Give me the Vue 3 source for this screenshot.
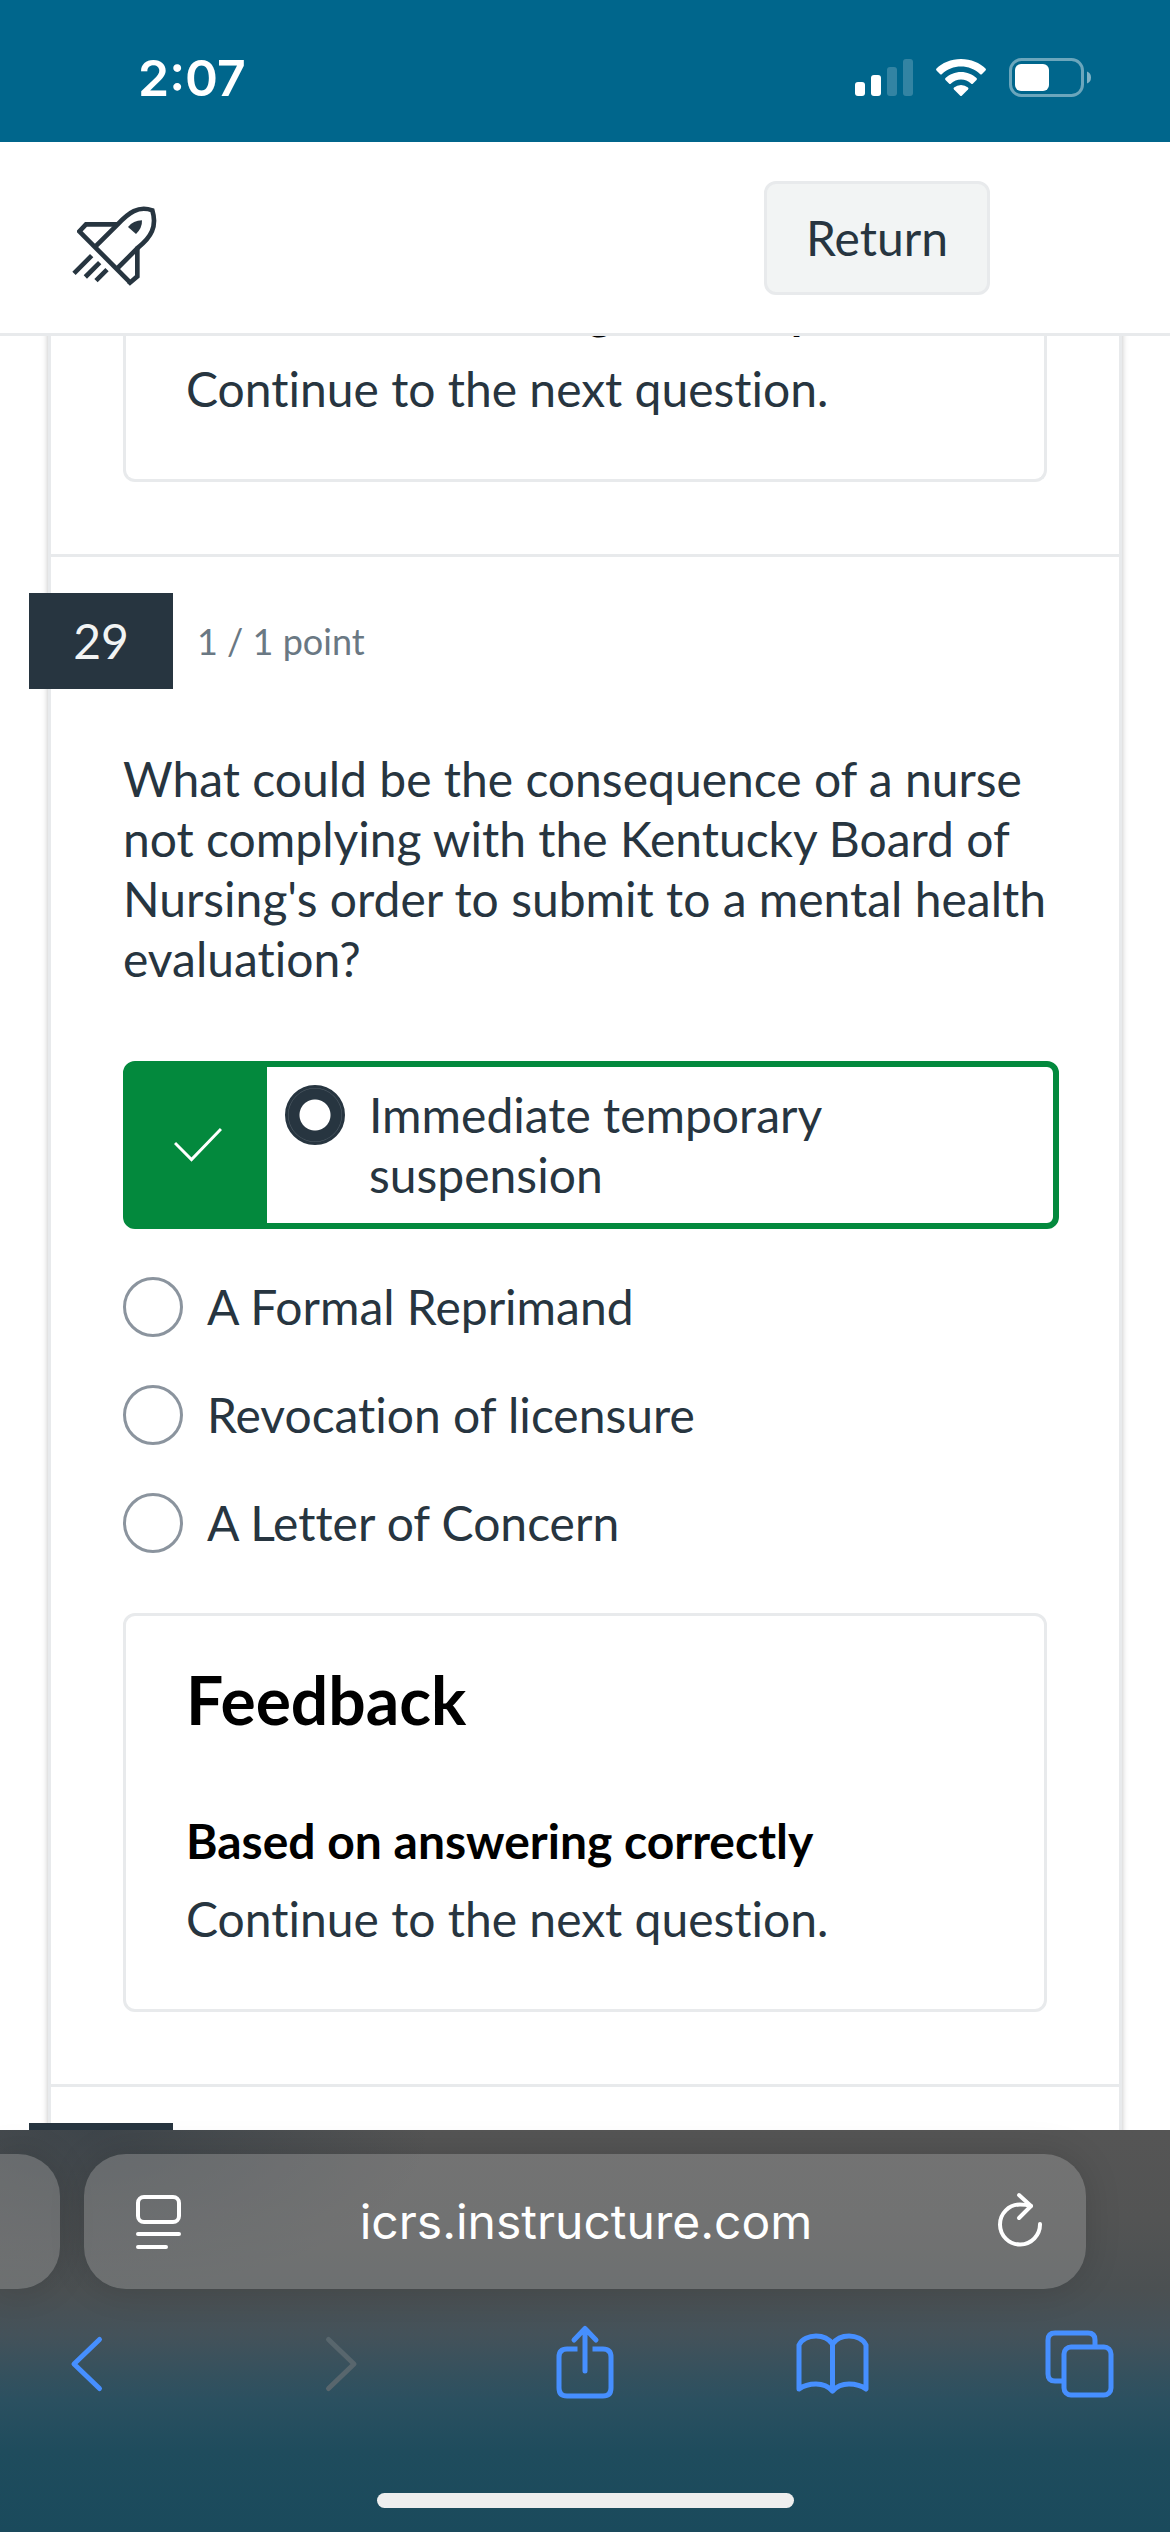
<script setup>
import { ref } from 'vue'

const answers = [
  { id: 'suspension', text: 'Immediate temporary suspension', correct: true },
  { id: 'reprimand', text: 'A Formal Reprimand' },
  { id: 'revocation', text: 'Revocation of licensure' },
  { id: 'letter', text: 'A Letter of Concern' },
]
const selected = ref('suspension')
const address = ref('icrs.instructure.com')
</script>

<template>
  <div class="screen">
    <div class="status">
      <span class="clock">2:07</span>
      <div class="indicators">
        <svg width="58" height="40" viewBox="0 0 58 40" fill="#fff">
          <rect x="0" y="24" width="10" height="14" rx="3" />
          <rect x="16" y="17" width="10" height="21" rx="3" />
          <rect x="32" y="9" width="10" height="29" rx="3" opacity=".2" />
          <rect x="48" y="1" width="10" height="37" rx="3" opacity=".2" />
        </svg>
        <svg width="52" height="40" viewBox="0 0 52 40" fill="#fff">
          <path d="M26 1C36 1 45 5 50.500 10.500Q51.500 11.500 50.500 12.500L47 16Q46 17 45 16C40 11 33 8.500 26 8.500S12 11 7 16Q6 17 5 16L1.500 12.500Q.5 11.500 1.500 10.500C7 5 16 1 26 1Z" />
          <path d="M26 14C32 14 37.500 16.500 41.500 20Q42.500 21 41.500 22L38 25.500Q37 26.500 36 25.500C33 23 30 21.500 26 21.500S19 23 16 25.500Q15 26.500 14 25.500L10.500 22Q9.500 21 10.500 20C14.500 16.500 20 14 26 14Z" />
          <path d="M26 27Q30 27 33 29.500Q34 30.500 33 31.500L27 37.500Q26 38.500 25 37.500L19 31.500Q18 30.500 19 29.500Q22 27 26 27Z" />
        </svg>
        <svg width="84" height="40" viewBox="0 0 84 40">
          <rect x="1.500" y="1.500" width="72" height="36" rx="11" fill="none" stroke="#fff" stroke-opacity=".42" stroke-width="3" />
          <rect x="6" y="6" width="34" height="27" rx="6" fill="#fff" />
          <path d="M78 13.500Q82 15 82 19.500T78 25.500Z" fill="#fff" opacity=".5" />
        </svg>
      </div>
    </div>

    <header class="header">
      <a class="logo" href="#" aria-label="Home">
        <svg width="88" height="84" viewBox="60 72 264 252" fill="none" stroke="#273540" stroke-width="14">
          <path d="M88 154L240 307" />
          <path d="M88 158V154L108 133H203" />
          <path d="M136 200L203 133C236 98 265 76 307 91C322 140 303 172 265 202L200 267" />
          <path d="M262 200V289L240 308L236 304" />
          <path d="M72 280L125 227M106 291L149 248M138 302L171 269" />
          <path d="M234 141Q250 121 276 121Q277 144 258 162Z" fill="#273540" stroke="none" />
        </svg>
      </a>
      <button class="return" type="button">Return</button>
    </header>

    <main class="viewport">
      <div class="sheet">
        <section class="question previous">
          <div class="feedback continued">
            <h3>Based on answering correctly</h3>
            <p>Continue to the next question.</p>
          </div>
        </section>

        <section class="question">
          <div class="meta">
            <span class="number">29</span>
            <span class="points">1 / 1 point</span>
          </div>
          <p id="prompt" class="prompt">
            What could be the consequence of a nurse not complying with the Kentucky Board of Nursing's order to submit to a mental health evaluation?
          </p>
          <div class="answers" role="radiogroup" aria-labelledby="prompt">
            <div v-for="a in answers" :key="a.id" class="answer" :class="{ correct: a.correct }">
              <span v-if="a.correct" class="mark">
                <svg width="48" height="36" viewBox="0 0 48 36" fill="none" stroke="#fff" stroke-width="3">
                  <path d="M1 16L17.500 32.500L47 2" />
                </svg>
              </span>
              <label :for="a.id">
                <input :id="a.id" v-model="selected" type="radio" name="answer" :value="a.id" />
                <span>{{ a.text }}</span>
              </label>
            </div>
          </div>
          <div class="feedback">
            <h2>Feedback</h2>
            <h3>Based on answering correctly</h3>
            <p>Continue to the next question.</p>
          </div>
        </section>

        <section class="question">
          <div class="meta">
            <span class="number"></span>
          </div>
        </section>
      </div>
    </main>

    <footer class="browser">
      <div class="tabs">
        <div class="neighbour"></div>
        <div class="address">
          <button type="button" aria-label="Page menu">
            <svg width="48" height="60" viewBox="0 0 48 60" fill="none" stroke="#fff" stroke-width="4" stroke-linecap="round">
              <rect x="4" y="5" width="41" height="25" rx="6" />
              <path d="M4 42H45M4 55H32" />
            </svg>
          </button>
          <input v-model="address" type="text" aria-label="Address" />
          <button type="button" aria-label="Reload">
            <svg width="48" height="60" viewBox="0 0 48 60" fill="none" stroke="#fff" stroke-width="4" stroke-linecap="round" stroke-linejoin="round">
              <path d="M44 32A20 20 0 1 1 24 12.500Q30 12.500 35 14" />
              <path d="M23 3L35 14L23 26" />
            </svg>
          </button>
        </div>
      </div>
      <nav class="toolbar">
        <button type="button" aria-label="Back">
          <svg width="84" height="84" viewBox="0 0 84 84"><path d="M55.500 19.500L30 44L55.500 68.500" /></svg>
        </button>
        <button type="button" class="off" aria-label="Forward">
          <svg width="84" height="84" viewBox="0 0 84 84"><path d="M35.500 19.500L61 44L35.500 68.500" /></svg>
        </button>
        <button type="button" aria-label="Share">
          <svg width="84" height="84" viewBox="0 0 84 84">
            <path stroke-linecap="butt" d="M35.500 29H25Q17 29 17 37V68Q17 76 25 76H61Q69 76 69 68V37Q69 29 61 29H50.500" />
            <path d="M43 9V51M32 20L43 8.500L54 20" />
          </svg>
        </button>
        <button type="button" aria-label="Bookmarks">
          <svg width="84" height="84" viewBox="0 0 84 84">
            <path d="M41.500 24C38 19 32 16 25 16S11 19 8 25V69C12 66 18 64 25 64S38 67 41.500 71C45 67 51 64 58 64S71 66 75 69V25C72 19 65 16 58 16S45 19 41.500 24V71" />
          </svg>
        </button>
        <button type="button" aria-label="Tabs">
          <svg width="84" height="84" viewBox="0 0 84 84">
            <rect x="24" y="27" width="47" height="48" rx="7" />
            <path stroke-linecap="butt" d="M24 61H15Q8 61 8 54V20Q8 13 15 13H48Q55 13 55 20V27" />
          </svg>
        </button>
      </nav>
      <div class="home"></div>
    </footer>
  </div>
</template>

<style>
body {
  margin: 0;
  background: #fff;
}
</style>

<style scoped>
.screen {
  display: flex;
  flex-direction: column;
  height: 100vh;
  overflow: hidden;
  background: #fff;
  color: #273540;
  font-family: Lato, sans-serif;
  font-size: 48px;
  line-height: 60px;
  font-variant-ligatures: none;
}
.screen * {
  box-sizing: border-box;
}
h2,
h3,
p {
  margin: 0;
}
button {
  padding: 0;
  border: 0;
  background: none;
  color: inherit;
  font: inherit;
  font-variant-ligatures: none;
}
svg {
  display: block;
}

/* device status bar */
.status {
  flex: none;
  display: flex;
  align-items: center;
  justify-content: space-between;
  height: 142px;
  padding: 14px 77px 0 138px;
  background: #00668c;
}
.clock {
  color: #fff;
  font: 600 50px/60px Inter, sans-serif;
}
.indicators {
  display: flex;
  gap: 22px;
}

/* page header */
.header {
  flex: none;
  display: flex;
  align-items: center;
  justify-content: space-between;
  height: 194px;
  padding: 0 180px 0 70px;
  border-bottom: 3px solid #e8eaec;
}
.logo {
  padding-top: 16px;
}
.return {
  height: 114px;
  padding: 0 39px;
  border: 3px solid #e8eaec;
  border-radius: 12px;
  background: #f2f4f4;
}

/* quiz sheet */
.viewport {
  flex: 1;
  min-height: 0;
  overflow: hidden;
}
.sheet {
  margin: -55px 48px 0;
  border: solid #e8eaec;
  border-width: 0 3px;
  box-shadow: 0 0 6px rgba(0, 0, 0, 0.25);
}
.question {
  padding: 36px 72px 72px;
}
.question + .question {
  border-top: 3px solid #e8eaec;
}
.previous {
  padding-top: 0;
}
.meta {
  display: flex;
  align-items: center;
  gap: 24px;
  margin-left: -94px;
}
.number {
  width: 144px;
  height: 96px;
  background: #273540;
  color: #f2f4f4;
  line-height: 96px;
  text-align: center;
}
.points {
  color: #6a7883;
  font-size: 36px;
}
.prompt {
  margin: 60px 0 72px;
}
.answers {
  display: flex;
  flex-direction: column;
  gap: 48px;
  margin-bottom: 60px;
}
.answer label {
  display: flex;
  gap: 24px;
}
.answer input {
  flex: none;
  width: 60px;
  height: 60px;
  margin: 0;
  appearance: none;
  border: 3px solid #8b949e;
  border-radius: 50%;
}
.answer input:checked {
  border-color: #273540;
  background: radial-gradient(circle, #fff 15px, #273540 16px, #273540 26px, #56626c 27px);
}
.correct {
  display: flex;
  margin-right: -12px;
  border: 6px solid #03893d;
  border-radius: 12px;
}
.correct label {
  flex: 1;
  padding: 18px 108px 18px 18px;
}
.mark {
  display: flex;
  flex: none;
  align-items: center;
  justify-content: center;
  width: 138px;
  background: #03893d;
}
.feedback {
  padding: 42px 60px 60px;
  border: 3px solid #e8eaec;
  border-radius: 12px;
}
.continued {
  padding-top: 0;
  border-top: 0;
  border-radius: 0 0 12px 12px;
}
.feedback h2 {
  margin-bottom: 70px;
  color: #000;
  font-size: 66px;
  line-height: 83px;
}
.feedback h3 {
  margin-bottom: 18px;
  color: #000;
  font-size: 48px;
}

/* browser chrome */
.browser {
  flex: none;
  display: flex;
  flex-direction: column;
  padding: 24px 0;
  background:
    radial-gradient(ellipse 340px 160px at 90px 0, rgba(39, 53, 64, 0.5), transparent),
    linear-gradient(#555 0, #535454 90px, #4b5052 160px, #44525a 205px, #2b5060 270px, #1f4c5d 320px, #1a4a5c 100%);
}
.tabs {
  display: flex;
  gap: 24px;
  padding-right: 84px;
}
.neighbour,
.address {
  height: 135px;
  background: rgba(160, 160, 160, 0.4);
  box-shadow: 0 0 36px rgba(0, 0, 0, 0.14);
}
.neighbour {
  width: 60px;
  border-radius: 0 42px 42px 0;
}
.address {
  flex: 1;
  display: flex;
  align-items: center;
  justify-content: space-between;
  padding: 0 42px 0 50px;
  border-radius: 42px;
}
.address input {
  flex: 1;
  min-width: 0;
  padding: 0 6px 0 0;
  border: 0;
  background: none;
  color: #fff;
  font: 400 48px/60px Inter, sans-serif;
  text-align: center;
}
.toolbar {
  display: flex;
  justify-content: space-between;
  padding: 31px 46px 0 44px;
}
.toolbar svg {
  fill: none;
  stroke: #468fff;
  stroke-width: 5px;
  stroke-linecap: round;
  stroke-linejoin: round;
}
.toolbar .off svg {
  stroke: #58666d;
}
.home {
  align-self: center;
  width: 417px;
  height: 15px;
  margin-top: 89px;
  border-radius: 8px;
  background: #eee;
}
</style>
